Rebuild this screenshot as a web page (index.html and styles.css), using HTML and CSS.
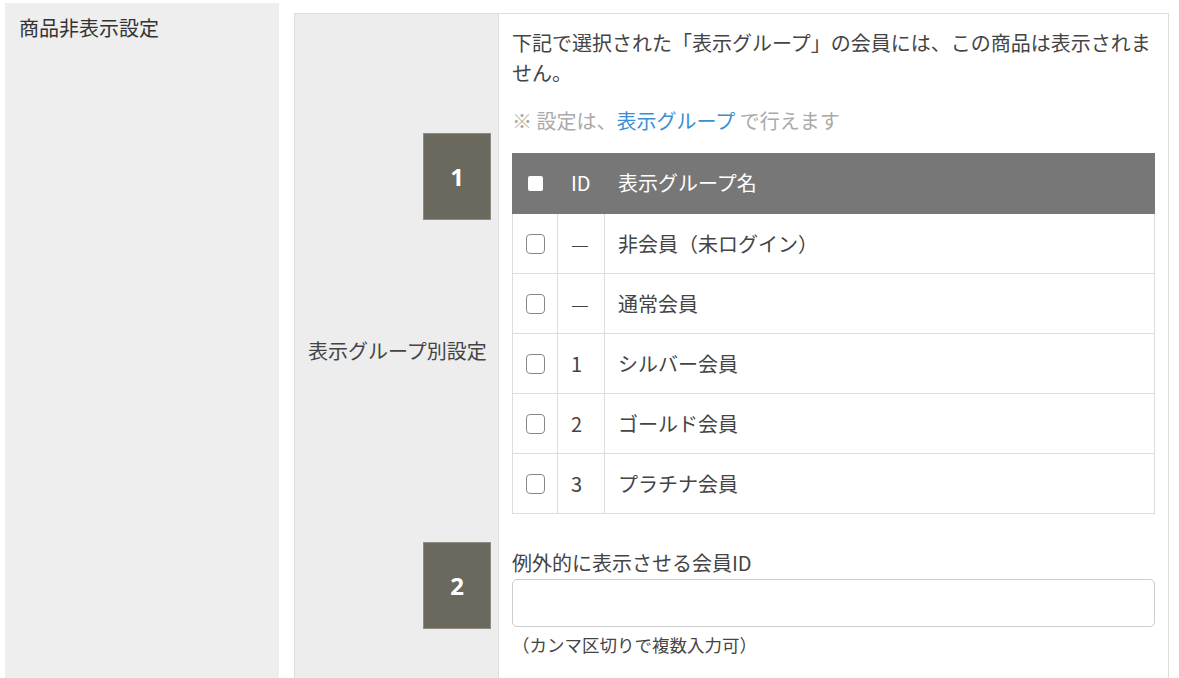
FILE: index.html
```html
<!DOCTYPE html>
<html lang="ja">
<head>
    <meta charset="UTF-8">
    <title>商品非表示設定</title>
    <link rel="stylesheet" href="styles.css">
</head>
<body>
    <div class="setting-row">
        <div class="setting-title">商品非表示設定</div>

        <div class="setting-body">
            <div class="group-box">
                <div class="group-label">表示グループ別設定</div>

                <div class="group-content">
                    <p class="lead">下記で選択された「表示グループ」の会員には、この商品は表示されません。</p>
                    <p class="note">※ 設定は、<a href="#" class="link">表示グループ</a> で行えます</p>

                    <table class="group-table">
                        <thead>
                            <tr>
                                <th class="col-check"><input type="checkbox" class="check-all"></th>
                                <th class="col-id">ID</th>
                                <th>表示グループ名</th>
                            </tr>
                        </thead>
                        <tbody>
                            <tr>
                                <td class="col-check"><input type="checkbox" class="check"></td>
                                <td class="col-id dash">—</td>
                                <td>非会員（未ログイン）</td>
                            </tr>
                            <tr>
                                <td class="col-check"><input type="checkbox" class="check"></td>
                                <td class="col-id dash">—</td>
                                <td>通常会員</td>
                            </tr>
                            <tr>
                                <td class="col-check"><input type="checkbox" class="check"></td>
                                <td class="col-id">1</td>
                                <td>シルバー会員</td>
                            </tr>
                            <tr>
                                <td class="col-check"><input type="checkbox" class="check"></td>
                                <td class="col-id">2</td>
                                <td>ゴールド会員</td>
                            </tr>
                            <tr>
                                <td class="col-check"><input type="checkbox" class="check"></td>
                                <td class="col-id">3</td>
                                <td>プラチナ会員</td>
                            </tr>
                        </tbody>
                    </table>

                    <label class="field-label" for="memberIds">例外的に表示させる会員ID</label>
                    <input type="text" id="memberIds" class="field-input">
                    <p class="field-help">（カンマ区切りで複数入力可）</p>
                </div>

                <!-- annotation markers -->
                <span class="marker marker-1">1</span>
                <span class="marker marker-2">2</span>
            </div>
        </div>
    </div>
</body>
</html>
```

FILE: styles.css
```css
body {
    margin: 0;
    background-color: #ffffff;
    font-family: "Noto Sans CJK JP", "Noto Sans", sans-serif;
    color: #444444;
}

.setting-row {
    display: flex;
    align-items: stretch;
    padding: 3px 0 0 5px;
}

.setting-title {
    width: 274px;
    flex-shrink: 0;
    background-color: #eeeeee;
    padding: 10px 14px;
    box-sizing: border-box;
    font-size: 20px;
    line-height: 30px;
    color: #333333;
}

.setting-body {
    width: 875px;
    margin-left: 15px;
    padding-top: 10px;
}

.group-box {
    position: relative;
    display: flex;
    border: 1px solid #dddddd;
}

.group-label {
    width: 204px;
    flex-shrink: 0;
    background-color: #ededed;
    border-right: 1px solid #dddddd;
    display: flex;
    align-items: center;
    padding-left: 13px;
    box-sizing: border-box;
    font-size: 20px;
    color: #444444;
}

.group-content {
    flex: 1;
    padding: 14px 13px 26px 13px;
    background-color: #ffffff;
}

.lead {
    margin: 0;
    font-size: 20px;
    line-height: 30px;
}

.note {
    margin: 18px 0 0;
    font-size: 20px;
    line-height: 30px;
    color: #aaaaaa;
}

.link {
    color: #3a8fd4;
    text-decoration: none;
}

.group-table {
    width: 100%;
    margin-top: 17px;
    border-collapse: collapse;
    font-size: 20px;
}

.group-table th {
    height: 57px;
    background-color: #777777;
    color: #ffffff;
    font-weight: normal;
    text-align: left;
    padding: 0 13px 2px;
    border: 1px solid #777777;
    border-left-color: #a5a5a5;
}

.group-table th:first-child {
    border-left-color: #777777;
}

.group-table td {
    height: 59px;
    padding: 0 13px;
    border: 1px solid #dddddd;
    color: #444444;
}

.group-table .col-check {
    width: 44px;
    padding: 0;
    text-align: center;
}

.group-table .col-id {
    width: 20px;
}

.dash {
    color: #b5b5b5;
    font-weight: 300;
}

.check,
.check-all {
    appearance: none;
    display: block;
    margin: 0 auto;
    box-sizing: border-box;
}

.check {
    width: 19px;
    height: 20px;
    border: 1.5px solid #888888;
    border-radius: 4px;
    background-color: #ffffff;
}

.check-all {
    width: 15px;
    height: 15px;
    border-radius: 2px;
    background-color: #ffffff;
}

.field-label {
    display: block;
    margin-top: 34px;
    font-size: 20px;
    line-height: 30px;
}

.field-input {
    display: block;
    width: 100%;
    height: 48px;
    margin-top: 1px;
    box-sizing: border-box;
    border: 1px solid #cccccc;
    border-radius: 5px;
    background-color: #ffffff;
}

.field-help {
    margin: 3px 0 0;
    font-size: 17.5px;
    line-height: 30px;
}

.marker {
    position: absolute;
    left: 128px;
    width: 68px;
    height: 87px;
    box-sizing: border-box;
    background-color: #6b695d;
    border: 1px solid #8e8c82;
    color: #ffffff;
    font-family: "Noto Sans", sans-serif;
    font-weight: bold;
    font-size: 24px;
    display: flex;
    align-items: center;
    justify-content: center;
}

.marker-1 {
    top: 119px;
}

.marker-2 {
    top: 528px;
}
```
